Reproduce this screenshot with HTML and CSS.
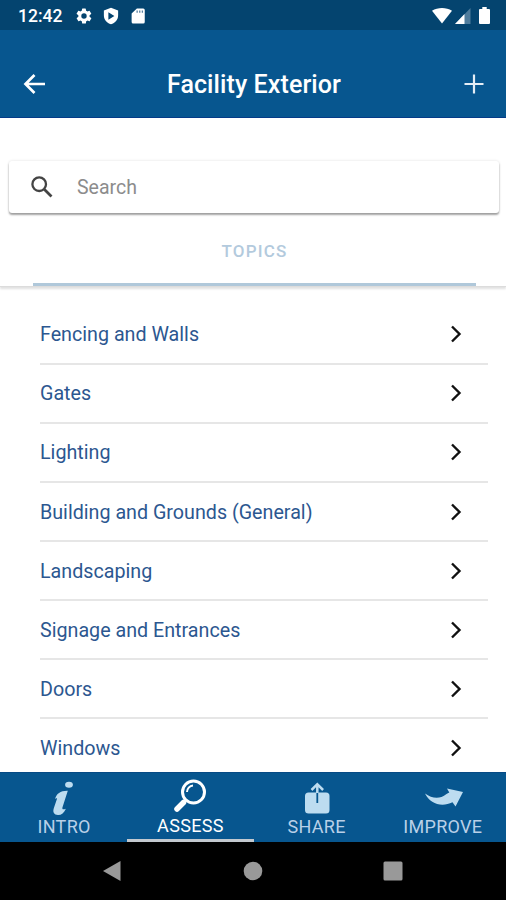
FILE: index.html
```html
<!DOCTYPE html>
<html lang="en">
<head>
    <meta charset="UTF-8">
    <meta name="viewport" content="width=device-width, initial-scale=1.0">
    <title>Facility Exterior</title>
    <link rel="stylesheet" href="styles.css">
</head>
<body>
    <div class="app">
        <!-- Status bar -->
        <div class="status-bar">
            <span class="clock">12:42</span>
            <svg class="status-icon" width="18" height="18" viewBox="0 0 24 24"><path fill="#fff" fill-rule="evenodd" d="M19.4 13a7.500 7.500 0 0 0 0-2l2.100-1.600a.5.5 0 0 0 .1-.7l-2-3.400a.5.5 0 0 0-.6-.2l-2.500 1a7.300 7.300 0 0 0-1.700-1l-.4-2.600a.5.5 0 0 0-.5-.5h-4a.5.5 0 0 0-.5.5L9 5.100a7.700 7.700 0 0 0-1.700 1l-2.500-1a.5.5 0 0 0-.6.2l-2 3.400a.5.5 0 0 0 .1.7L4.500 11a7.900 7.900 0 0 0 0 2l-2.100 1.600a.5.5 0 0 0-.1.700l2 3.400c.1.200.4.300.6.200l2.500-1a7.300 7.300 0 0 0 1.700 1l.4 2.600c0 .3.200.5.5.5h4c.3 0 .5-.2.5-.5l.4-2.600a7.700 7.700 0 0 0 1.700-1l2.500 1c.2.100.5 0 .6-.2l2-3.400a.5.500 0 0 0-.1-.7zM12 15.600a3.600 3.600 0 1 1 0-7.200 3.600 3.600 0 0 1 0 7.200z"/></svg>
            <svg class="status-icon" width="18" height="18" viewBox="0 0 24 24"><path fill="#fff" fill-rule="evenodd" d="M12 1 2.500 4.500V11c0 6 4 10.500 9.500 12 5.500-1.500 9.500-6 9.500-12V4.500zM8.500 7l8 5-8 5z"/></svg>
            <svg class="status-icon" width="18" height="18" viewBox="0 0 24 24"><path fill="#fff" d="M19 2h-8.500L3.500 8.500V20a2 2 0 0 0 2 2H19a2 2 0 0 0 2-2V4a2 2 0 0 0-2-2z"/><path fill="#557f9f" d="M10 4.500h1.700v3H10zM13.500 4.500h1.700v3h-1.700zM17 4.500h1.700v3H17z"/></svg>
            <div class="status-right">
                <svg width="20" height="16" viewBox="0 0 20 16"><path fill="#fff" d="M0 2.800C5.800-.9 14.200-.9 20 2.800L10 15.500z"/></svg>
                <svg width="16" height="16" viewBox="0 0 16 16"><path fill="#4f7c9c" d="M15.500 0v16H0z"/><path fill="#fff" d="M9.500 6v10H0z"/></svg>
                <svg class="battery" width="11" height="17" viewBox="0 0 11 17"><path fill="#fff" d="M3.300 0h4.400v2H10q1 0 1 1v13q0 1-1 1H1q-1 0-1-1V3q0-1 1-1h2.300z"/></svg>
            </div>
        </div>

        <!-- Title bar -->
        <header class="header">
            <svg width="24" height="22" viewBox="0 0 24 22"><path d="M22 11H3M11.500 2 2.500 11l9 9" fill="none" stroke="#fff" stroke-width="2.700"/></svg>
            <h1>Facility Exterior</h1>
            <svg width="20" height="20" viewBox="0 0 20 20"><path d="M10 .5v19M.5 10h19" stroke="#e4edf6" stroke-width="2.200"/></svg>
        </header>

        <main class="content">
            <div class="search">
                <svg width="22" height="22" viewBox="0 0 22 22"><circle cx="8.200" cy="8.200" r="6.800" fill="none" stroke="#444" stroke-width="2.300"/><path d="m13.200 13.200 7.300 7.300" stroke="#444" stroke-width="2.700"/></svg>
                <span>Search</span>
            </div>
            <div class="tabs">
                <div class="tab">TOPICS</div>
            </div>

            <ul class="topics">
                <li><span>Fencing and Walls</span><svg class="chevron" viewBox="0 0 12 18"><path d="m2 1.500 7.500 7.500L2 16.500"/></svg></li>
                <li><span>Gates</span><svg class="chevron" viewBox="0 0 12 18"><path d="m2 1.500 7.500 7.500L2 16.500"/></svg></li>
                <li><span>Lighting</span><svg class="chevron" viewBox="0 0 12 18"><path d="m2 1.500 7.500 7.500L2 16.500"/></svg></li>
                <li><span>Building and Grounds (General)</span><svg class="chevron" viewBox="0 0 12 18"><path d="m2 1.500 7.500 7.500L2 16.500"/></svg></li>
                <li><span>Landscaping</span><svg class="chevron" viewBox="0 0 12 18"><path d="m2 1.500 7.500 7.500L2 16.500"/></svg></li>
                <li><span>Signage and Entrances</span><svg class="chevron" viewBox="0 0 12 18"><path d="m2 1.500 7.500 7.500L2 16.500"/></svg></li>
                <li><span>Doors</span><svg class="chevron" viewBox="0 0 12 18"><path d="m2 1.500 7.500 7.500L2 16.500"/></svg></li>
                <li><span>Windows</span><svg class="chevron" viewBox="0 0 12 18"><path d="m2 1.500 7.500 7.500L2 16.500"/></svg></li>
            </ul>
        </main>

        <!-- Bottom tabs -->
        <nav class="bottom-nav">
            <div class="nav-item">
                <svg width="36" height="36" viewBox="0 0 36 36"><ellipse cx="23" cy="4.700" rx="3.900" ry="3" fill="#bddcf0"/><path fill="#bddcf0" d="M9 19c1.500-5.500 5.500-8.500 12.800-8.300l-5.300 16.600c-.6 2 .4 2.700 3.400 1.400-2 4.300-4.700 6.500-7.900 6.300-4-.2-5.500-2.800-4.200-6.800l3.300-9.700c-.8-.4-1.400-.1-2.100.5z"/></svg>
                <span>INTRO</span>
            </div>
            <div class="nav-item active">
                <svg width="36" height="36" viewBox="0 0 36 36"><circle cx="21.500" cy="13" r="11" fill="none" stroke="#fff" stroke-width="3"/><path d="M15 13a6.500 6.500 0 0 1 6-6.500" fill="none" stroke="#fff" stroke-width="2"/><path d="m13.500 21-2 2" stroke="#fff" stroke-width="3"/><path d="m11.500 23.500-6.500 6.500" stroke="#fff" stroke-width="5.500" stroke-linecap="round"/></svg>
                <span>ASSESS</span>
            </div>
            <div class="nav-item">
                <svg width="36" height="36" viewBox="0 0 36 36"><rect x="6" y="12.500" width="24.500" height="21" rx="3.500" fill="#bddcf0"/><path d="M18.300 12v11" stroke="#07568f" stroke-width="1.800"/><path d="M18.300 4.500v8.500M12.500 10l5.800-5.800L24.100 10" fill="none" stroke="#bddcf0" stroke-width="2.500"/></svg>
                <span>SHARE</span>
            </div>
            <div class="nav-item">
                <svg width="42" height="36" viewBox="0 0 42 36"><path fill="#bddcf0" d="M3 13.500c7 4.700 14 6.500 21.500.5.700-.6 2-1.200 2.800-1.600L25 8.500 41 12l-7.500 14.500-3-4.300C20 27.500 8 24 3 13.500z"/></svg>
                <span>IMPROVE</span>
            </div>
        </nav>

        <!-- Android system buttons -->
        <div class="system-nav">
            <svg width="20" height="22" viewBox="0 0 20 22"><path fill="#999" d="M18.500 1v20L1 11z"/></svg>
            <svg width="20" height="20" viewBox="0 0 20 20"><circle cx="10" cy="10" r="9.300" fill="#999"/></svg>
            <svg width="20" height="20" viewBox="0 0 20 20"><rect x=".5" y=".5" width="19" height="19" rx="1.500" fill="#999"/></svg>
        </div>
    </div>
</body>
</html>
```
FILE: styles.css
```css
* {
    box-sizing: border-box;
}

body {
    margin: 0;
    font-family: Roboto, sans-serif;
    background-color: #fff;
}

svg {
    display: block;
    flex: none;
}

.app {
    display: flex;
    flex-direction: column;
    width: 506px;
    height: 900px;
    overflow: hidden;
}

.status-bar {
    display: flex;
    align-items: center;
    flex: none;
    height: 30px;
    padding: 1px 16px 0 18px;
    background-color: #04446f;
}

.clock {
    width: 57px;
    color: #fff;
    font-size: 17.5px;
    font-weight: 500;
}

.status-icon {
    margin-right: 9px;
}

.status-right {
    display: flex;
    align-items: center;
    gap: 3px;
    margin-left: auto;
}

.battery {
    margin-left: 5px;
}

.header {
    display: flex;
    align-items: center;
    justify-content: space-between;
    flex: none;
    height: 88px;
    padding: 21px 22px 0 23px;
    background-color: #07568f;
    border-bottom: 1px solid #053b88;
}

.header h1 {
    margin: 0 3px 0 0;
    color: #fff;
    font-size: 25px;
    font-weight: 500;
    letter-spacing: 0.1px;
}

.content {
    flex: 1;
    min-height: 0;
    overflow: hidden;
}

.search {
    display: flex;
    align-items: center;
    gap: 24px;
    height: 52px;
    margin: 43px 7px 0 9px;
    padding: 0 22px;
    border-radius: 3px;
    box-shadow: 0 2px 2px rgba(0, 0, 0, 0.35), 0 0 3px rgba(0, 0, 0, 0.12);
    color: #8c8c8c;
    font-size: 19.5px;
}

.tabs {
    height: 74px;
    padding: 0 30px 0 33px;
    border-bottom: 1px solid #dcdcdc;
    box-shadow: 0 2px 2px rgba(0, 0, 0, 0.12);
}

.tab {
    height: 73px;
    padding-top: 28px;
    border-bottom: 3px solid #b0c8da;
    color: #b3cadd;
    font-size: 17px;
    font-weight: 500;
    line-height: 20px;
    letter-spacing: 1.2px;
    text-align: center;
}

.topics {
    margin: 18.7px 18px 0 40px;
    padding: 0;
    list-style: none;
}

.topics li {
    display: flex;
    align-items: center;
    justify-content: space-between;
    height: 59.1px;
    padding-right: 26px;
    border-bottom: 2px solid #e6e6e6;
    color: #2c5790;
    font-size: 19.7px;
}

.topics span {
    padding-top: 1px;
}

.chevron {
    width: 12px;
    height: 18px;
    fill: none;
    stroke: #111;
    stroke-width: 2.4;
}

.bottom-nav {
    display: flex;
    flex: none;
    height: 70px;
    padding-left: 1px;
    background-color: #07568f;
    border-top: 1px solid #064a85;
}

.nav-item {
    display: flex;
    flex-direction: column;
    align-items: center;
    flex: 1;
    padding-top: 7px;
    color: #b9d0e8;
    font-size: 18px;
    line-height: 22px;
    letter-spacing: 0.3px;
}

.nav-item.active {
    padding-top: 6px;
    border-bottom: 3px solid #c3c9cf;
    color: #fff;
}

.system-nav {
    display: flex;
    align-items: center;
    justify-content: space-between;
    flex: none;
    height: 58px;
    padding: 0 103px 0 102px;
    background-color: #000;
}
```
